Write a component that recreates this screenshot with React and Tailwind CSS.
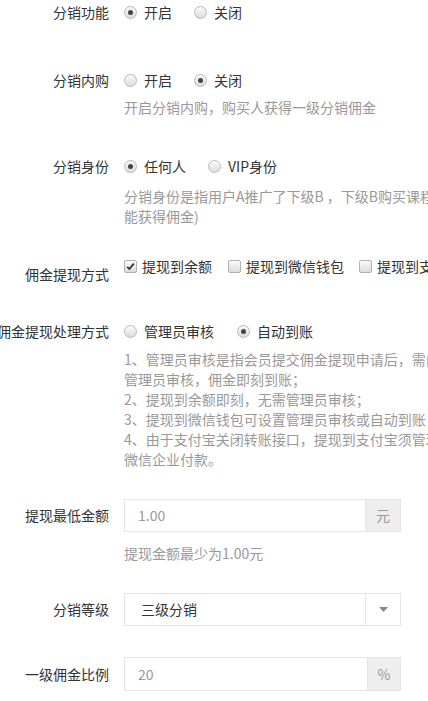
import React from "react";

const Radio = ({ checked }) => (
  <span className="relative inline-flex w-[13px] h-[13px] shrink-0 items-center justify-center rounded-full border border-[#b9b9b9] bg-gradient-to-b from-[#fafafa] to-[#dcdcdc]">
    {checked && <span className="w-[5px] h-[5px] rounded-full bg-[#444]" />}
  </span>
);

const Checkbox = ({ checked }) => (
  <span className="relative inline-flex w-[13px] h-[13px] shrink-0 items-center justify-center rounded-[2px] border border-[#b0b0b0] bg-gradient-to-b from-[#fafafa] to-[#dcdcdc]">
    {checked && (
      <svg width="9" height="9" viewBox="0 0 9 9">
        <path d="M1.2 4.8 L3.4 7 L7.8 1.6" fill="none" stroke="#333" strokeWidth="1.8" />
      </svg>
    )}
  </span>
);

const Label = ({ children, className = "" }) => (
  <div className={"w-[109px] shrink-0 flex justify-end whitespace-nowrap " + className}>
    <span>{children}</span>
  </div>
);

const RadioOpt = ({ checked, children, className = "" }) => (
  <span className={"inline-flex items-center whitespace-nowrap " + className}>
    <Radio checked={checked} />
    <span className="ml-[7px]">{children}</span>
  </span>
);

const CheckOpt = ({ checked, children, className = "" }) => (
  <span className={"inline-flex items-center whitespace-nowrap " + className}>
    <Checkbox checked={checked} />
    <span className="ml-[5px]">{children}</span>
  </span>
);

const Help = ({ lines, className = "" }) => (
  <div className={"text-[#999] leading-[20px] whitespace-nowrap " + className}>
    {lines.map((l, i) => (
      <div key={i}>{l}</div>
    ))}
  </div>
);

export default function App() {
  return (
    <div className="w-[428px] h-[701px] overflow-hidden bg-white text-[14px] text-[#333] font-['Microsoft_YaHei','Noto_Sans_CJK_SC',sans-serif]">
      {/* Row 1 */}
      <div className="flex leading-[26px] -mt-[1px]">
        <Label>分销功能</Label>
        <div className="ml-[15px] flex items-center h-[26px]">
          <RadioOpt checked>开启</RadioOpt>
          <RadioOpt className="ml-[22px]">关闭</RadioOpt>
        </div>
      </div>

      {/* Row 2 */}
      <div className="flex leading-[26px] mt-[42px]">
        <Label>分销内购</Label>
        <div className="ml-[15px]">
          <div className="flex items-center h-[26px]">
            <RadioOpt>开启</RadioOpt>
            <RadioOpt checked className="ml-[22px]">关闭</RadioOpt>
          </div>
          <Help className="mt-[4px]" lines={["开启分销内购，购买人获得一级分销佣金"]} />
        </div>
      </div>

      {/* Row 3 */}
      <div className="flex leading-[26px] mt-[36px]">
        <Label>分销身份</Label>
        <div className="ml-[15px]">
          <div className="flex items-center h-[26px]">
            <RadioOpt checked>任何人</RadioOpt>
            <RadioOpt className="ml-[22px]">VIP身份</RadioOpt>
          </div>
          <Help
            className="mt-[7px]"
            lines={[
              "分销身份是指用户A推广了下级B ，下级B购买课程后，上级A是否",
              "能获得佣金)",
            ]}
          />
        </div>
      </div>

      {/* Row 4 */}
      <div className="flex leading-[26px] mt-[27px]">
        <Label className="pt-[8px]">佣金提现方式</Label>
        <div className="ml-[15px] flex items-center h-[26px]">
          <CheckOpt checked>提现到余额</CheckOpt>
          <CheckOpt className="ml-[16px]">提现到微信钱包</CheckOpt>
          <CheckOpt className="ml-[15px]">提现到支付宝</CheckOpt>
        </div>
      </div>

      {/* Row 5 */}
      <div className="flex leading-[26px] mt-[31px]">
        <Label>佣金提现处理方式</Label>
        <div className="ml-[15px]">
          <div className="flex items-center h-[26px]">
            <RadioOpt>管理员审核</RadioOpt>
            <RadioOpt checked className="ml-[23px]">自动到账</RadioOpt>
          </div>
          <Help
            className="mt-[5px]"
            lines={[
              "1、管理员审核是指会员提交佣金提现申请后，需由管理员审核",
              "管理员审核，佣金即刻到账；",
              "2、提现到余额即刻，无需管理员审核；",
              "3、提现到微信钱包可设置管理员审核或自动到账",
              "4、由于支付宝关闭转账接口，提现到支付宝须管理员手动打款",
              "微信企业付款。",
            ]}
          />
        </div>
      </div>

      {/* Row 6 */}
      <div className="flex mt-[30px]">
        <Label className="leading-[33px]">提现最低金额</Label>
        <div className="ml-[15px]">
          <div className="flex w-[277px] h-[33px] border border-[#e5e5e5]">
            <div className="flex-1 pl-[13px] leading-[31px] text-[#999]">1.00</div>
            <div className="w-[35px] border-l border-[#e5e5e5] bg-[#eee] text-[#999] flex items-center justify-center">元</div>
          </div>
          <Help className="mt-[11px]" lines={["提现金额最少为1.00元"]} />
        </div>
      </div>

      {/* Row 7 */}
      <div className="flex mt-[30px]">
        <Label className="leading-[33px]">分销等级</Label>
        <div className="ml-[15px]">
          <div className="flex w-[277px] h-[33px] border border-[#e5e5e5]">
            <div className="flex-1 pl-[16px] leading-[31px] text-[#333]">三级分销</div>
            <div className="w-[35px] border-l border-[#e5e5e5] bg-white flex items-center justify-center">
              <svg width="9" height="5" viewBox="0 0 9 5">
                <path d="M0 0 H9 L4.5 5 Z" fill="#888" />
              </svg>
            </div>
          </div>
        </div>
      </div>

      {/* Row 8 */}
      <div className="flex mt-[31px]">
        <Label className="leading-[34px]">一级佣金比例</Label>
        <div className="ml-[15px]">
          <div className="flex w-[277px] h-[34px] border border-[#e5e5e5]">
            <div className="flex-1 pl-[13px] leading-[32px] text-[#999]">20</div>
            <div className="w-[33px] border-l border-[#e5e5e5] bg-[#eee] text-[#999] flex items-center justify-center">%</div>
          </div>
        </div>
      </div>
    </div>
  );
}
